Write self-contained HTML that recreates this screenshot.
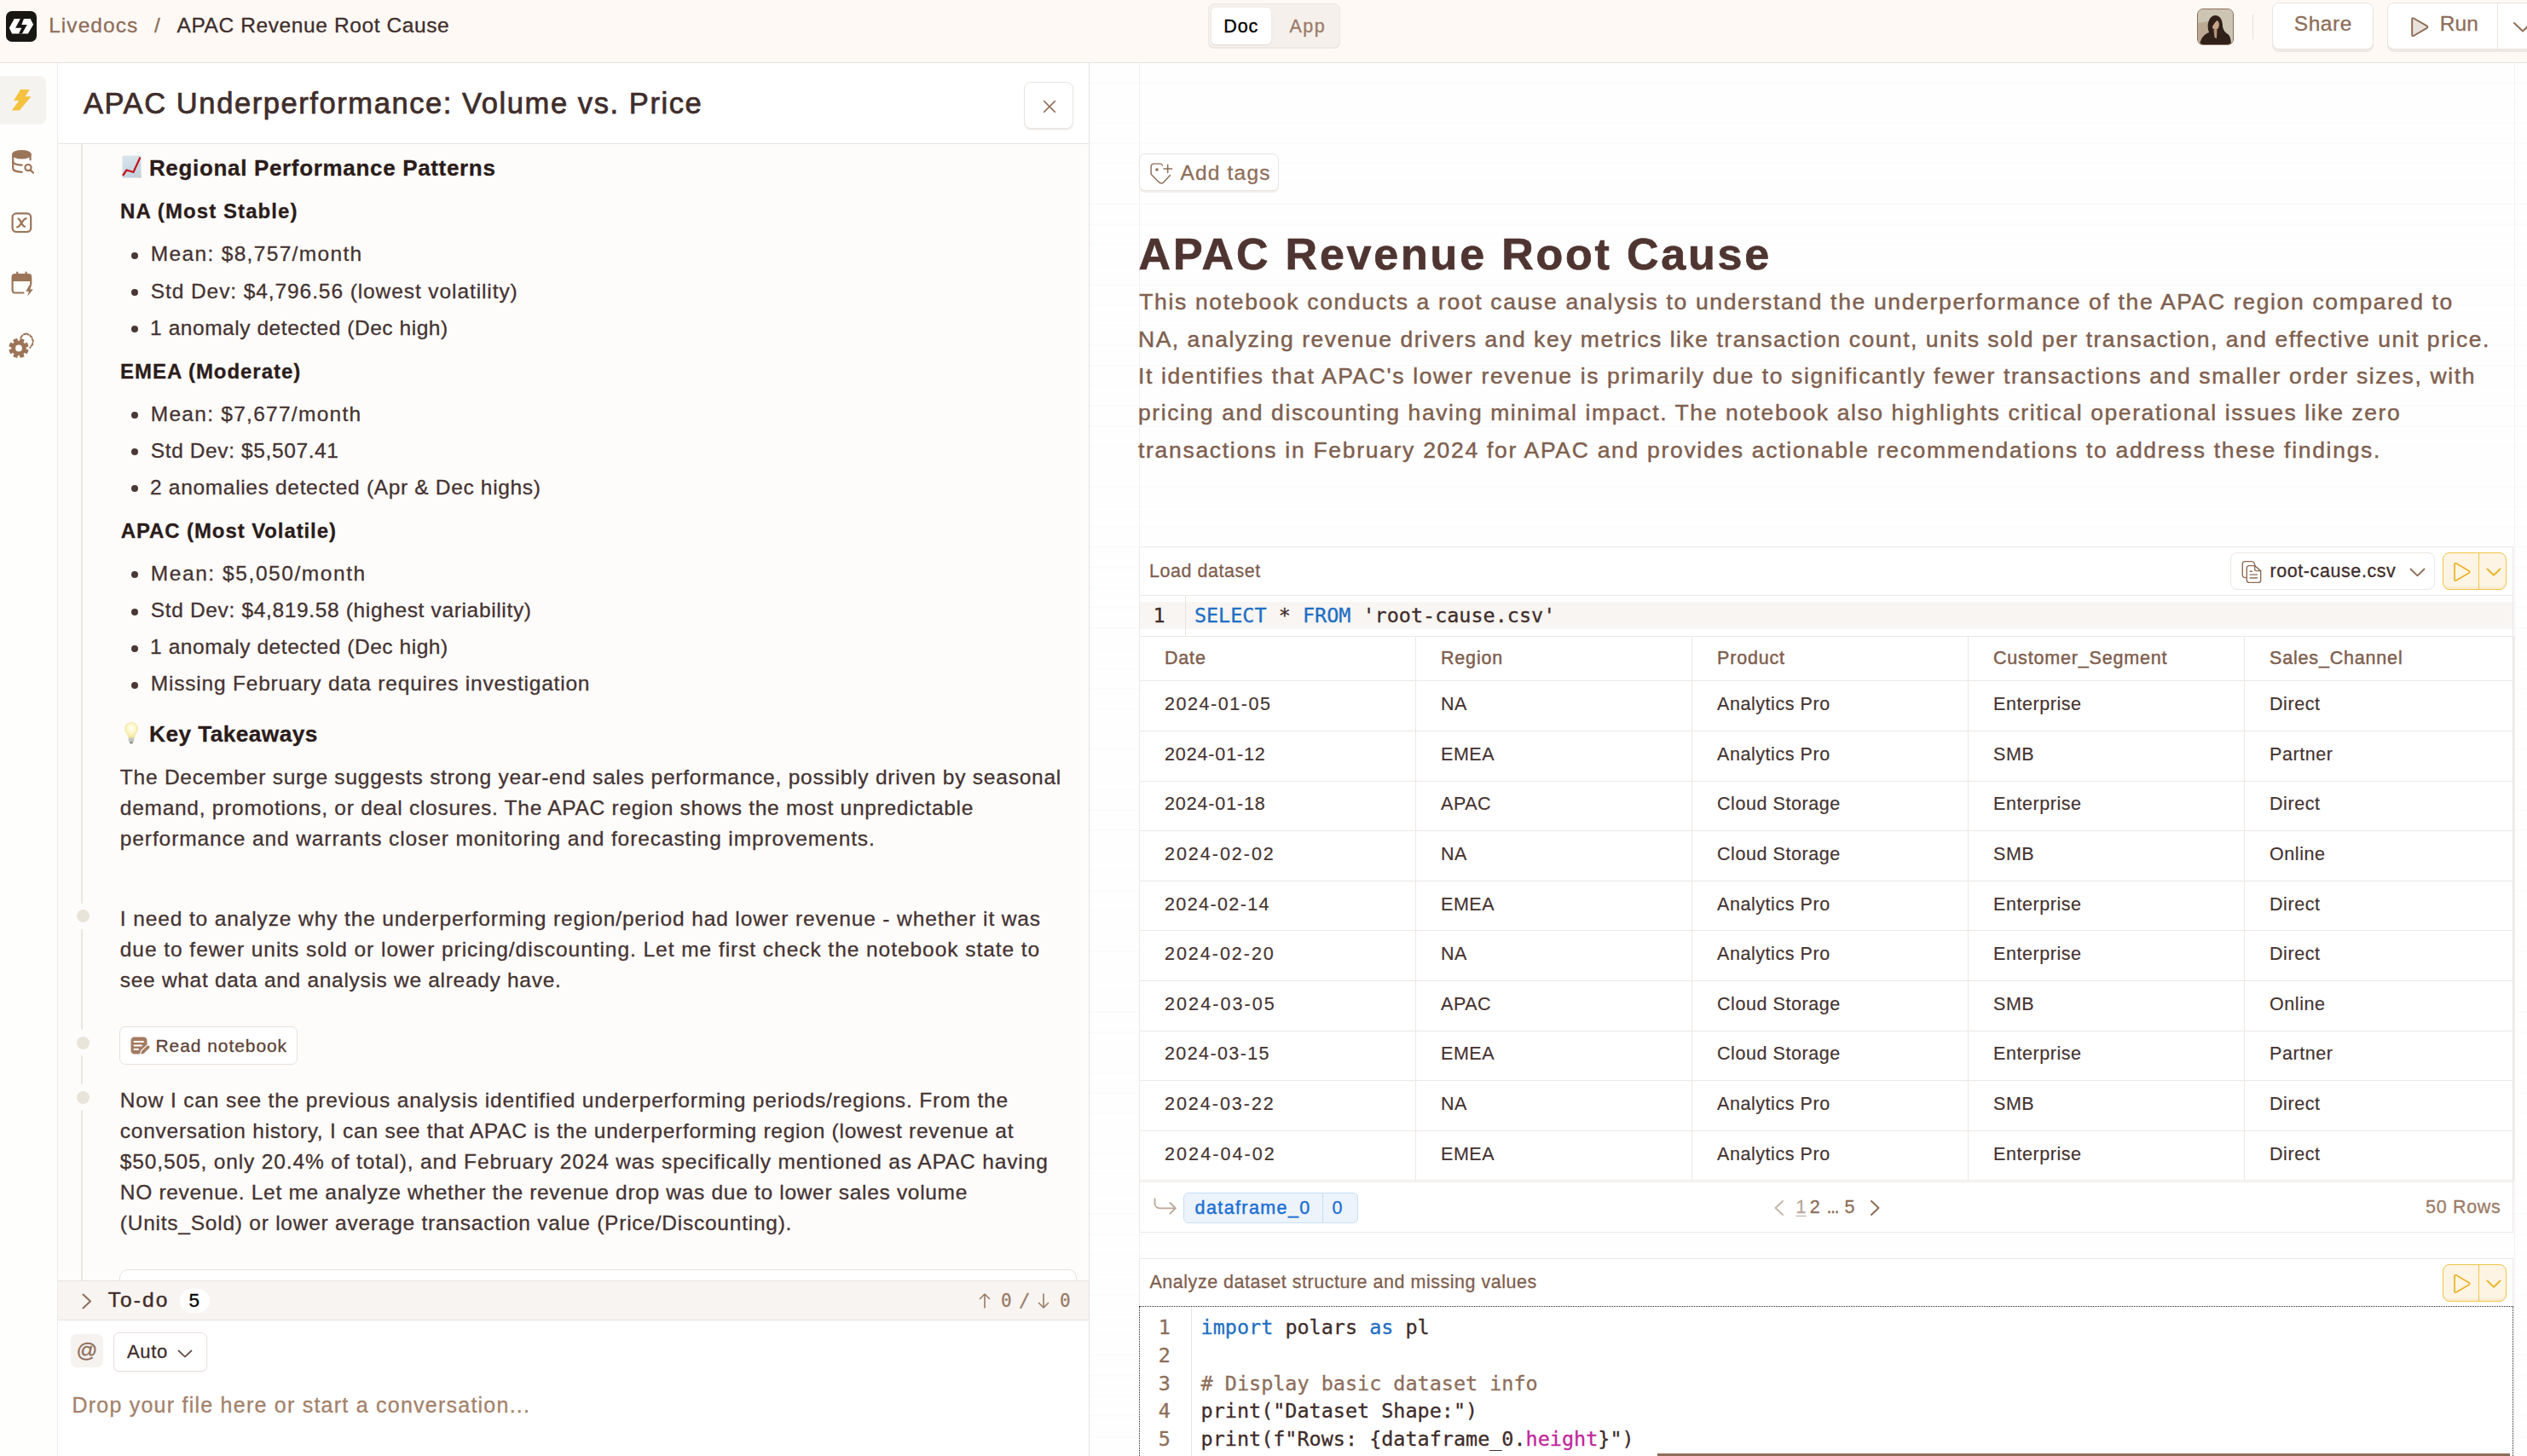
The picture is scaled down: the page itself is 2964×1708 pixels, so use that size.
<!DOCTYPE html>
<html lang="en"><head><meta charset="utf-8"><title>APAC Revenue Root Cause - Livedocs</title>
<style>
*{box-sizing:border-box;margin:0;padding:0}
html,body{width:2964px;height:1708px;overflow:hidden;background:#fff}
body{position:relative;font-family:'Liberation Sans',sans-serif;color:#3f2d2b;-webkit-font-smoothing:antialiased}
.t{position:absolute;white-space:pre;display:block;-webkit-text-stroke:0.3px}
table.df{-webkit-text-stroke:0.18px}
.abs{position:absolute}
svg{position:absolute;overflow:visible}
h1,h2,h3,h4{font-weight:400;font-size:inherit}ul{list-style:none}a{text-decoration:none}
button{font:inherit;color:inherit;background:none;border:0}
/* top bar */
.topbar{position:absolute;left:0;top:0;width:2964px;height:74px;background:#fef9f5;border-bottom:1px solid #e9e3df}
.logo{position:absolute;left:7px;top:13px;width:36px;height:36px;border-radius:7px;background:#191714}
.seg{position:absolute;left:1417px;top:4px;width:155px;height:52px;border-radius:7px;background:#f5f0ec;border:1px solid #efe9e5;box-shadow:0 1px 0 #ebe5e1}
.seg .on{position:absolute;left:3px;top:4px;width:70px;height:43px;border-radius:5px;background:#fff;box-shadow:0 1px 2px rgba(60,30,10,.10)}
.avatar{position:absolute;left:2577px;top:10px;width:43px;height:43px;border-radius:7px;overflow:hidden;border:1px solid #8c705c;background:#ccc4b1}
.vsep{position:absolute;left:2642px;top:17px;width:1px;height:29px;background:#e6dfda}
.btn{position:absolute;background:#fff;border:1px solid #ebe4df;border-radius:8px;box-shadow:0 3px 0 #efe9e6}
/* sidebar */
.sidebar{position:absolute;left:0;top:74px;width:68px;height:1634px;background:#fefefd;border-right:1px solid #ecebea}
.sidebar .active{position:absolute;left:-8px;top:15px;width:62px;height:57px;border-radius:8px;background:#f5f3ef}
/* chat */
.chat{position:absolute;left:68px;top:74px;width:1210px;height:1634px;background:#fefcfa;border-right:1px solid #e6e3e0;overflow:hidden}
.chat-head{position:absolute;left:0;top:0;width:1209px;height:95px;background:#fff;border-bottom:1px solid #e8e4e1}
.iconbtn{position:absolute;background:#fff;border:1px solid #e9e4e0;border-radius:8px;box-shadow:0 2px 0 #f2efed}
.rail{position:absolute;left:27px;width:2px;background:#eae7e3}
.dot{position:absolute;left:22px;width:15px;height:15px;border-radius:50%;background:#e8e4da}
.bul{position:absolute;left:86px;width:8px;height:8px;border-radius:50%;background:#4a3836}
.chip{position:absolute;background:#fff;border:1px solid #e9e1db;border-radius:7px}
.todo{position:absolute;left:0;top:1428px;width:1209px;height:47px;background:#f8f4f1;border-top:1px solid #e9e4e0;border-bottom:1px solid #e9e4e0}
.badge{position:absolute;left:143px;top:9px;width:35px;height:28px;border-radius:14px;background:#fff}
.composer{position:absolute;left:0;top:1475px;width:1209px;height:159px;background:#fff}
.at{position:absolute;left:15px;top:16px;width:38px;height:39px;border-radius:7px;background:#f6f2ef}
.sel{position:absolute;left:65px;top:14px;width:110px;height:46px;border-radius:7px;background:#fff;border:1px solid #e9e2dd;box-shadow:0 1px 2px rgba(60,30,10,.06)}
/* notebook */
.nb{position:absolute;left:1278px;top:74px;width:1686px;height:1634px;background:#fefefe repeating-linear-gradient(to bottom,transparent 0,transparent 22.2px,#fafbfb 22.2px,#fafbfb 23.7px);overflow:hidden}
.paper{position:absolute;left:58px;top:0;width:1614px;height:1634px;border-left:1px solid #f3f1f0;border-right:1px solid #f3f1f0;}
.cell{position:absolute;background:#fff;border:1px solid #ece8e5}
.cell-head{position:absolute;left:0;top:0;right:0}
.filebtn{position:absolute;border:1px solid #ece6e1;border-radius:8px;background:#fff}
.runbtn{position:absolute;border:1px solid #f0c54a;border-radius:8px;background:#fdf4e3;box-shadow:inset 0 -3px 0 #faecd2}
.runbtn i{position:absolute;left:41px;top:0;width:1px;height:100%;background:#f0c54a}
.code{position:absolute;font-family:'DejaVu Sans Mono','Liberation Mono',monospace}
.gut{position:absolute;left:0;top:0;bottom:0;border-right:1px solid #e9e4e0;background:#fdfbfa}
table.df{position:absolute;border-collapse:collapse;table-layout:fixed;font-size:21.5px}
table.df td,table.df th{border:1px solid #ece8e5;padding:0 0 0 29px;text-align:left;font-weight:400;white-space:nowrap;overflow:hidden}
table.df th{-webkit-text-stroke:0.45px;color:#7f5f4f;height:52.4px;padding-bottom:1px}
table.df td{color:#453331;height:58.6px;padding-bottom:3px}
.kw{color:#1f6fc4}.cm{color:#8d6e5a}.at2{color:#c2269c}

</style></head>
<body>
<header class="topbar">
<div class="logo"><svg width="36" height="36" viewBox="0 0 36 36"><polygon fill="#fff" points="3.8,19.8 9.7,9.1 28.7,9.1 32.1,15.8 25.9,26.4 7.1,26.4"/><polygon fill="#191714" points="16.9,9.1 20.95,9.1 18.35,16 24.7,16 18.9,26.4 14.9,26.4 18.35,19.7 11.1,19.7"/></svg></div>
<nav>
<a class="t" style="left:57.2px;top:14.2px;font-size:24.5px;line-height:32px;letter-spacing:1.05px;color:#8e6d59;">Livedocs</a>
<span class="t" style="left:181.0px;top:14.2px;font-size:24.5px;line-height:32px;color:#8e6d59;">/</span>
<span class="t" style="left:207.5px;top:14.2px;font-size:24.5px;line-height:32px;letter-spacing:0.60px;color:#3f2d2b;">APAC Revenue Root Cause</span>
</nav>
<div class="seg"><div class="on"></div>
<span class="t" style="left:17.3px;top:11.6px;font-size:21.5px;line-height:28px;letter-spacing:0.90px;color:#000;-webkit-text-stroke:0.35px #000;">Doc</span>
<span class="t" style="left:94.5px;top:11.6px;font-size:21.5px;line-height:28px;letter-spacing:1.53px;color:#9a7a66;">App</span>
</div>
<div class="avatar"><svg width="43" height="43" viewBox="0 0 43 43"><rect width="43" height="43" fill="#cdc5b3"/><path d="M0 16 L12 14 L12 43 L0 43Z" fill="#bba993"/><path d="M2 43 C3 33 8 29 13 27 C10 20 12 8 20 7 C27 7 29 14 29 20 C30 25 32 27 35 29 C38 31 39 36 39 43Z" fill="#2f2118"/><ellipse cx="20.6" cy="18" rx="4.3" ry="6" fill="#c8a489"/><path d="M18.5 24 L22.5 24 L22 34 L19.5 33Z" fill="#b8937a"/><path d="M15.5 12 C18 9 23 9 25.5 13 C23 12 21 14 19 17 C17 20 16 22 15.8 24 C14.5 20 14.5 15 15.5 12Z" fill="#2f2118"/></svg></div>
<i class="vsep"></i>
<button class="btn" style="left:2665px;top:3px;width:119px;height:55px"></button>
<span class="t" style="left:2690.8px;top:12.3px;font-size:24.5px;line-height:32px;letter-spacing:0.55px;color:#8e6d59;">Share</span>
<div class="btn" style="left:2800px;top:3px;width:200px;height:55px"><i class="abs" style="left:128px;top:0;width:1px;height:53px;background:#ebe4df"></i><svg style="left:25px;top:15px" width="24" height="26" viewBox="0 0 24 26"><path d="M3.2 3.6 C3.2 2.6 4.2 2 5.1 2.5 L20.6 11.3 C21.6 11.9 21.6 13.3 20.6 13.9 L5.1 23 C4.2 23.5 3.2 22.9 3.2 21.9Z" fill="#e9e2dc" stroke="#8e6d59" stroke-width="2" stroke-linejoin="round"/></svg><svg style="left:146px;top:21px" width="24" height="14" viewBox="0 0 24 14"><path d="M2 2 L12 11.5 L22 2" fill="none" stroke="#8e6d59" stroke-width="2" stroke-linecap="round" stroke-linejoin="round"/></svg></div>
<span class="t" style="left:2861.7px;top:12.3px;font-size:24.5px;line-height:32px;letter-spacing:0.06px;color:#8e6d59;">Run</span>
</header>
<nav class="sidebar"><div class="active"></div>
<svg style="left:0;top:0" width="68" height="400" viewBox="0 74 68 400"><polygon fill="#f5c23f" points="24.1,105 34.8,105 29.6,113.2 36.6,113.2 22.8,129.5 13.8,129.5 22.3,118 16.1,118"/><g fill="none" stroke="#9c7458" stroke-width="2.2" stroke-linecap="round"><ellipse cx="25.4" cy="181.3" rx="10.2" ry="4.2" fill="#9c7458"/><path d="M15.2 181.3 V197.5 C15.2 200 19.5 201.8 25.8 201.8"/><path d="M35.6 181.3 V187.5"/><path d="M15.2 189.4 C15.2 191.8 19.6 193.6 25.8 193.6"/><circle cx="33" cy="196.6" r="3.6"/><path d="M35.8 199.6 L39 202.8"/></g><rect x="14.6" y="250.4" width="21.6" height="21.6" rx="4.5" fill="none" stroke="#9c7458" stroke-width="2.2"/><g fill="none" stroke="#9c7458" stroke-width="2.300" stroke-linecap="round"><path d="M20.200 266.300 C23.500 266.800 26.800 256.200 30.600 256.400"/><path d="M21.600 256.600 C24 257 25.800 265.600 29 265.800"/></g><g fill="none" stroke="#9c7458" stroke-width="2.2" stroke-linecap="round" stroke-linejoin="round"><path d="M27.5 343.5 H17.5 C15.8 343.5 14.6 342.3 14.6 340.6 V325 C14.6 323.3 15.8 322.1 17.5 322.1 H33.3 C35 322.1 36.2 323.3 36.2 325 V334"/><path d="M20.2 319.6 V323"/><path d="M30.6 319.6 V323"/></g><path d="M14.6 330 V325 C14.6 323.3 15.8 322.1 17.5 322.1 H33.3 C35 322.1 36.2 323.3 36.2 325 V330Z" fill="#9c7458"/><polygon fill="#9c7458" points="34.400,334.600 30.400,341.800 33.800,341.800 32.200,347.600 38.800,339.400 35.400,339.400 37,334.600"/></svg>
<svg style="left:0;top:310px" width="68" height="60" viewBox="0 384 68 60"><polygon points="32.9,410.8 31.5,414.4 28.6,413.2 26.8,415.0 28.0,417.9 24.4,419.3 23.3,416.5 20.7,416.5 19.6,419.3 16.0,417.9 17.2,415.0 15.4,413.2 12.5,414.4 11.1,410.8 13.9,409.7 13.9,407.1 11.1,406.0 12.5,402.4 15.4,403.6 17.2,401.8 16.0,398.9 19.6,397.5 20.7,400.3 23.3,400.3 24.4,397.5 28.0,398.9 26.8,401.8 28.6,403.6 31.5,402.4 32.9,406.0 30.1,407.1 30.1,409.7" fill="#9c7458" stroke="#9c7458" stroke-width="1.2" stroke-linejoin="round"/><circle cx="22" cy="408.4" r="3.9" fill="#fefefd"/><path d="M24.4 396.2 C25.4 393.6 27.6 391.8 30.4 391.8 M30.4 391.8 C31.2 391.2 32.4 391.4 33 392.4 C34.4 392.4 35.6 393.2 35.8 394.6 C37.4 395 38.2 396.4 37.8 398 C39 399 39.2 400.8 38 402 C38.6 403.4 38 405 36.6 405.6 C36.6 406.6 36 407.4 35.2 407.8" fill="none" stroke="#9c7458" stroke-width="2" stroke-linecap="round" stroke-dasharray="3.2 2.2"/></svg>
</nav>
<section class="chat">
<div class="chat-body">
<i class="rail" style="top:95px;height:891px"></i>
<i class="rail" style="top:1016px;height:118px"></i>
<i class="rail" style="top:1164px;height:34px"></i>
<i class="rail" style="top:1228px;height:200px"></i>
<i class="dot" style="top:993.0px"></i>
<i class="dot" style="top:1142.0px"></i>
<i class="dot" style="top:1206.0px"></i>
<svg style="left:75px;top:108px" width="23" height="27" viewBox="0 0 23 27" role="img" aria-label="chart increasing"><defs><linearGradient id="pg" x1="0" y1="0" x2="0.3" y2="1"><stop offset="0" stop-color="#dbe7ef"/><stop offset="1" stop-color="#c3d2dc"/></linearGradient></defs><rect x="0.5" y="0.5" width="22" height="26" fill="url(#pg)"/><path d="M18 22 H22.5 V26.5 H18Z" fill="#c9cfd3"/><path d="M1 24 L5.5 17.5 L13.5 20 L21.5 2.5" fill="none" stroke="#c4141c" stroke-width="2.2" stroke-linejoin="miter"/></svg>
<h3 class="t" style="left:106.9px;top:105.5px;font-size:26px;line-height:34px;letter-spacing:0.67px;font-weight:700;color:#2b1c1b;">Regional Performance Patterns</h3>
<h4 class="t" style="left:73.1px;top:157.8px;font-size:24px;line-height:31px;letter-spacing:1.09px;font-weight:700;color:#2b1c1b;">NA (Most Stable)</h4>
<h4 class="t" style="left:73.1px;top:346.2px;font-size:24px;line-height:31px;letter-spacing:0.95px;font-weight:700;color:#2b1c1b;">EMEA (Moderate)</h4>
<h4 class="t" style="left:73.7px;top:533.1px;font-size:24px;line-height:31px;letter-spacing:0.90px;font-weight:700;color:#2b1c1b;">APAC (Most Volatile)</h4>
<svg style="left:78px;top:772.5px" width="16" height="26" viewBox="0 0 16 26" role="img" aria-label="light bulb"><defs><radialGradient id="bg" cx="0.5" cy="0.38" r="0.62"><stop offset="0" stop-color="#fffff6"/><stop offset="0.55" stop-color="#fdf6c4"/><stop offset="1" stop-color="#f0df8e"/></radialGradient></defs><path d="M8 0.600 C12.300 0.600 15.400 3.800 15.400 7.800 C15.400 10.600 14 12.300 12.900 14 C12 15.400 11.600 16.800 11.500 18.600 H4.500 C4.400 16.800 4 15.400 3.100 14 C2 12.300 0.600 10.600 0.600 7.800 C0.600 3.800 3.700 0.600 8 0.600Z" fill="url(#bg)" stroke="#eadf9f" stroke-width="0.700"/><rect x="4.700" y="18.600" width="6.600" height="4.400" rx="1" fill="#c4c4be"/><path d="M5.800 23 H10.200 L9.300 25.400 H6.700Z" fill="#8e8e8a"/></svg>
<h3 class="t" style="left:107.0px;top:769.7px;font-size:26.3px;line-height:34px;letter-spacing:0.41px;font-weight:700;color:#2b1c1b;">Key Takeaways</h3>
<ul>
<li><i class="bul" style="top:221.8px"></i><span class="t" style="left:108.8px;top:208.3px;font-size:24.5px;line-height:32px;letter-spacing:1.33px;color:#443332;">Mean: $8,757/month</span></li>
<li><i class="bul" style="top:265.0px"></i><span class="t" style="left:108.8px;top:251.5px;font-size:24.5px;line-height:32px;letter-spacing:0.91px;color:#443332;">Std Dev: $4,796.56 (lowest volatility)</span></li>
<li><i class="bul" style="top:308.2px"></i><span class="t" style="left:108.1px;top:294.7px;font-size:24.5px;line-height:32px;letter-spacing:0.55px;color:#443332;">1 anomaly detected (Dec high)</span></li>
</ul>
<ul>
<li><i class="bul" style="top:409.0px"></i><span class="t" style="left:108.8px;top:395.5px;font-size:24.5px;line-height:32px;letter-spacing:1.27px;color:#443332;">Mean: $7,677/month</span></li>
<li><i class="bul" style="top:452.2px"></i><span class="t" style="left:108.8px;top:438.7px;font-size:24.5px;line-height:32px;letter-spacing:0.61px;color:#443332;">Std Dev: $5,507.41</span></li>
<li><i class="bul" style="top:495.4px"></i><span class="t" style="left:108.1px;top:481.9px;font-size:24.5px;line-height:32px;letter-spacing:0.67px;color:#443332;">2 anomalies detected (Apr &amp; Dec highs)</span></li>
</ul>
<ul>
<li><i class="bul" style="top:596.3px"></i><span class="t" style="left:108.8px;top:582.8px;font-size:24.5px;line-height:32px;letter-spacing:1.57px;color:#443332;">Mean: $5,050/month</span></li>
<li><i class="bul" style="top:639.5px"></i><span class="t" style="left:108.8px;top:626.0px;font-size:24.5px;line-height:32px;letter-spacing:0.65px;color:#443332;">Std Dev: $4,819.58 (highest variability)</span></li>
<li><i class="bul" style="top:682.7px"></i><span class="t" style="left:108.1px;top:669.2px;font-size:24.5px;line-height:32px;letter-spacing:0.55px;color:#443332;">1 anomaly detected (Dec high)</span></li>
<li><i class="bul" style="top:725.9px"></i><span class="t" style="left:108.8px;top:712.4px;font-size:24.5px;line-height:32px;letter-spacing:0.79px;color:#443332;">Missing February data requires investigation</span></li>
</ul>
<p>
<span class="t" style="left:72.8px;top:822.2px;font-size:24.5px;line-height:32px;letter-spacing:0.77px;color:#443332;">The December surge suggests strong year-end sales performance, possibly driven by seasonal</span>
<span class="t" style="left:72.8px;top:858.2px;font-size:24.5px;line-height:32px;letter-spacing:0.73px;color:#443332;">demand, promotions, or deal closures. The APAC region shows the most unpredictable</span>
<span class="t" style="left:72.8px;top:894.2px;font-size:24.5px;line-height:32px;letter-spacing:0.90px;color:#443332;">performance and warrants closer monitoring and forecasting improvements.</span>
</p>
<p>
<span class="t" style="left:72.8px;top:987.5px;font-size:24.5px;line-height:32px;letter-spacing:0.88px;color:#443332;">I need to analyze why the underperforming region/period had lower revenue - whether it was</span>
<span class="t" style="left:72.8px;top:1023.5px;font-size:24.5px;line-height:32px;letter-spacing:0.95px;color:#443332;">due to fewer units sold or lower pricing/discounting. Let me first check the notebook state to</span>
<span class="t" style="left:72.8px;top:1059.5px;font-size:24.5px;line-height:32px;letter-spacing:0.70px;color:#443332;">see what data and analysis we already have.</span>
</p>
<div class="chip" style="left:72px;top:1130px;width:209px;height:45px"><svg style="left:12px;top:10px" width="24" height="24" viewBox="0 0 24 24"><path d="M4.5 1.5 H15.5 C17.7 1.5 19.5 3.3 19.5 5.5 V12 L11 21.5 H4.5 C2.3 21.5 0.5 19.7 0.5 17.5 V5.5 C0.5 3.3 2.3 1.5 4.5 1.5Z" fill="#a47c63"/><path d="M4.5 7 H15 M4.5 11.5 H13 M4.5 16 H9" stroke="#fff" stroke-width="2" stroke-linecap="round"/><path d="M11.5 22.5 L12.5 17.8 L19 11.6 C20 10.7 21.6 10.8 22.5 11.8 C23.4 12.8 23.3 14.3 22.3 15.2 L15.8 21.4Z" fill="#a47c63" stroke="#fff" stroke-width="1.2"/></svg>
<span class="t" style="left:41.5px;top:7.9px;font-size:21px;line-height:27px;letter-spacing:0.93px;color:#5d4338;-webkit-text-stroke:0.3px #5d4338;">Read notebook</span>
</div>
<p>
<span class="t" style="left:72.8px;top:1200.5px;font-size:24.5px;line-height:32px;letter-spacing:0.84px;color:#443332;">Now I can see the previous analysis identified underperforming periods/regions. From the</span>
<span class="t" style="left:72.8px;top:1236.5px;font-size:24.5px;line-height:32px;letter-spacing:0.75px;color:#443332;">conversation history, I can see that APAC is the underperforming region (lowest revenue at</span>
<span class="t" style="left:72.8px;top:1272.5px;font-size:24.5px;line-height:32px;letter-spacing:0.86px;color:#443332;">$50,505, only 20.4% of total), and February 2024 was specifically mentioned as APAC having</span>
<span class="t" style="left:72.8px;top:1308.5px;font-size:24.5px;line-height:32px;letter-spacing:0.69px;color:#443332;">NO revenue. Let me analyze whether the revenue drop was due to lower sales volume</span>
<span class="t" style="left:72.8px;top:1344.5px;font-size:24.5px;line-height:32px;letter-spacing:0.76px;color:#443332;">(Units_Sold) or lower average transaction value (Price/Discounting).</span>
</p>
<div class="chip" style="left:72px;top:1415px;width:1123px;height:60px;border-radius:10px"></div>
</div>
<div class="chat-head">
<h2 class="t" style="left:30.0px;top:24.5px;font-size:34.5px;line-height:45px;letter-spacing:1.58px;color:#3f2d2b;-webkit-text-stroke:0.75px;">APAC Underperformance: Volume vs. Price</h2>
<button class="iconbtn" style="left:1133px;top:22px;width:58px;height:55px"><svg style="left:21px;top:20px" width="16" height="16" viewBox="0 0 16 16"><path d="M1.600 1.600 L14.400 14.400 M14.400 1.600 L1.600 14.400" stroke="#8e6d59" stroke-width="1.500" stroke-linecap="round"/></svg></button>
</div>
<div class="todo">
<svg style="left:28px;top:14px" width="12" height="19" viewBox="0 0 12 19"><path d="M1.5 1.5 L10 9.5 L1.5 17.5" fill="none" stroke="#8e6d59" stroke-width="2" stroke-linecap="round" stroke-linejoin="round"/></svg>
<span class="t" style="left:58.8px;top:6.2px;font-size:24.5px;line-height:32px;letter-spacing:2.07px;color:#3f2d2b;-webkit-text-stroke:0.45px #3f2d2b;">To-do</span>
<span class="badge"></span>
<span class="t" style="left:153.5px;top:7.9px;font-size:22.5px;line-height:29px;color:#000;">5</span>
<svg style="left:1080px;top:11.500px" width="110" height="22" viewBox="0 0 110 22" fill="none" stroke="#9b7b67" stroke-width="1.600" stroke-linecap="round" stroke-linejoin="round"><path d="M7 19 V3 M1.5 8.5 L7 3 L12.5 8.5"/><path d="M76 3 V19 M70.500 13.5 L76 19 L81.500 13.500"/></svg>
<span class="t" style="left:1106.0px;top:9.7px;font-size:21px;line-height:27px;color:#9b7b67;font-family:'DejaVu Sans Mono',monospace;">0</span>
<span class="t" style="left:1128.0px;top:9.7px;font-size:21px;line-height:27px;color:#9b7b67;font-family:'DejaVu Sans Mono',monospace;font-style:oblique;">/</span>
<span class="t" style="left:1175.0px;top:9.7px;font-size:21px;line-height:27px;color:#9b7b67;font-family:'DejaVu Sans Mono',monospace;">0</span>
</div>
<div class="composer">
<button class="at"></button>
<span class="t" style="left:21.5px;top:19.0px;font-size:24.5px;line-height:32px;color:#8e6d59;">@</span>
<button class="sel"> <svg style="left:74px;top:19px" width="18" height="11" viewBox="0 0 18 11"><path d="M1.500 1.500 L9 8.600 L16.500 1.500" fill="none" stroke="#6d5146" stroke-width="1.8" stroke-linecap="round" stroke-linejoin="round"/></svg></button>
<span class="t" style="left:81.0px;top:21.6px;font-size:22px;line-height:29px;letter-spacing:0.70px;color:#3f2d2b;">Auto</span>
<span class="t" style="left:16.4px;top:82.8px;font-size:25px;line-height:32px;letter-spacing:1.24px;color:#a3826c;">Drop your file here or start a conversation...</span>
</div>
</section>
<main class="nb"><div class="paper"></div>
<button class="iconbtn" style="left:58px;top:106px;width:164px;height:44px;border-radius:7px"><svg style="left:12px;top:10px" width="27" height="26" viewBox="0 0 27 26" fill="none" stroke="#8e6d59" stroke-width="1.450" stroke-linecap="round" stroke-linejoin="round"><path d="M14.500 3.100 C14.200 2 13.400 1.100 12.200 1.100 H4.600 C2.600 1.100 1.100 2.600 1.100 4.600 V12 C1.100 13 1.500 13.900 2.200 14.600 L10.600 22.900 C12.300 24.300 14.300 24.300 15.600 22.900 L23.600 14.500"/><circle cx="8" cy="8" r="1.100" fill="#8e6d59"/><path d="M20.700 2.300 V11.600 M16 6.900 H25.600"/></svg></button>
<span class="t" style="left:106.5px;top:113.1px;font-size:24.5px;line-height:32px;letter-spacing:1.18px;color:#8e6d59;">Add tags</span>
<h1 class="t" style="left:57.6px;top:194.0px;font-size:52px;line-height:60px;letter-spacing:2.80px;font-weight:700;color:#4f3531;-webkit-text-stroke:0.7px;">APAC Revenue Root Cause</h1>
<p>
<span class="t" style="left:58.2px;top:263.3px;font-size:26.5px;line-height:34px;letter-spacing:1.66px;color:#7f5f4f;-webkit-text-stroke:0.45px;">This notebook conducts a root cause analysis to understand the underperformance of the APAC region compared to</span>
<span class="t" style="left:57.0px;top:306.6px;font-size:26.5px;line-height:34px;letter-spacing:1.52px;color:#7f5f4f;-webkit-text-stroke:0.45px;">NA, analyzing revenue drivers and key metrics like transaction count, units sold per transaction, and effective unit price.</span>
<span class="t" style="left:57.0px;top:350.0px;font-size:26.5px;line-height:34px;letter-spacing:1.62px;color:#7f5f4f;-webkit-text-stroke:0.45px;">It identifies that APAC's lower revenue is primarily due to significantly fewer transactions and smaller order sizes, with</span>
<span class="t" style="left:57.0px;top:393.3px;font-size:26.5px;line-height:34px;letter-spacing:1.59px;color:#7f5f4f;-webkit-text-stroke:0.45px;">pricing and discounting having minimal impact. The notebook also highlights critical operational issues like zero</span>
<span class="t" style="left:57.0px;top:436.6px;font-size:26.5px;line-height:34px;letter-spacing:1.70px;color:#7f5f4f;-webkit-text-stroke:0.45px;">transactions in February 2024 for APAC and provides actionable recommendations to address these findings.</span>
</p>
<section class="cell" style="left:58px;top:567px;width:1612px;height:805px">
<span class="t" style="left:11.0px;top:13.6px;font-size:21.5px;line-height:28px;letter-spacing:0.54px;color:#7f5f4f;">Load dataset</span>
<div class="filebtn" style="left:1279px;top:6px;width:240px;height:44px"><svg style="left:11.500px;top:7.500px" width="24" height="28" viewBox="0 0 24 28" fill="none" stroke="#8e6d59" stroke-width="1.400" stroke-linecap="round" stroke-linejoin="round"><path d="M6.200 20.600 H4.300 C2.600 20.600 1.300 19.300 1.300 17.600 V4.600 C1.300 2.900 2.600 1.600 4.300 1.600 H12 C13.600 1.600 14.900 2.600 15.300 4.100 L16 6.400"/><path d="M9.300 6.600 H15.600 L22.700 12.600 V23.400 C22.700 25.100 21.400 26.400 19.700 26.400 H9.300 C7.600 26.400 6.300 25.100 6.300 23.400 V9.600 C6.300 7.900 7.600 6.600 9.300 6.600Z"/><path d="M15.600 6.600 V10.600 C15.600 11.700 16.500 12.600 17.600 12.600 H22.700"/><path d="M10.200 13.200 H12.700 M10.200 17.100 H18.400 M10.200 21 H18.400"/></svg><svg style="left:209px;top:17px" width="19" height="11" viewBox="0 0 19 11"><path d="M1.500 1.500 L9.500 9.300 L17.500 1.500" fill="none" stroke="#8e6d59" stroke-width="1.800" stroke-linecap="round" stroke-linejoin="round"/></svg></div>
<span class="t" style="left:1325.5px;top:14.3px;font-size:21.5px;line-height:28px;letter-spacing:0.58px;color:#3f2d2b;">root-cause.csv</span>
<div class="runbtn" style="left:1528px;top:6px;width:75px;height:44px"><i></i><svg style="left:11px;top:10px" width="22" height="24" viewBox="0 0 22 24"><path d="M2 2.800 C2 1.900 3 1.300 3.800 1.800 L19 10.800 C19.800 11.300 19.800 12.500 19 13 L3.800 22 C3 22.500 2 21.900 2 21Z" fill="none" stroke="#e9b52c" stroke-width="1.800" stroke-linejoin="round"/></svg><svg style="left:50px;top:17px" width="18" height="11" viewBox="0 0 18 11"><path d="M1.500 1.500 L9 8.800 L16.500 1.500" fill="none" stroke="#e9b52c" stroke-width="1.900" stroke-linecap="round" stroke-linejoin="round"/></svg></div>
<div class="code" style="left:0;top:56px;width:1610px;height:48px;border-top:1px solid #ece8e5;background:#fff"><div class="abs" style="left:0;top:7px;width:1610px;height:32px;background:#f8f5f2"></div><div class="gut" style="width:54px;background:transparent"></div>
<span class="t" style="left:15.5px;top:7.9px;font-size:23.45px;line-height:30px;color:#3f2d2b;font-family:'DejaVu Sans Mono',monospace;">1</span>
<code class="t" style="left:63.9px;top:7.9px;font-size:23.45px;line-height:30px;color:#3f2d2b;font-family:'DejaVu Sans Mono',monospace;"><span class="kw">SELECT</span> * <span class="kw">FROM</span> 'root-cause.csv'</code>
</div>
<table class="df" style="left:-1px;top:104px;width:1612px;letter-spacing:0.56px">
<colgroup><col style="width:324px"><col style="width:324px"><col style="width:324px"><col style="width:324px"><col style="width:316px"></colgroup>
<thead><tr style="letter-spacing:0.82px"><th>Date</th><th>Region</th><th>Product</th><th>Customer_Segment</th><th>Sales_Channel</th></tr></thead><tbody>
<tr><td style="letter-spacing:1.56px">2024-01-05</td><td>NA</td><td>Analytics Pro</td><td>Enterprise</td><td>Direct</td></tr>
<tr><td style="letter-spacing:0.87px">2024-01-12</td><td>EMEA</td><td>Analytics Pro</td><td>SMB</td><td>Partner</td></tr>
<tr><td style="letter-spacing:0.87px">2024-01-18</td><td>APAC</td><td>Cloud Storage</td><td>Enterprise</td><td>Direct</td></tr>
<tr><td style="letter-spacing:1.98px">2024-02-02</td><td>NA</td><td>Cloud Storage</td><td>SMB</td><td>Online</td></tr>
<tr><td style="letter-spacing:1.39px">2024-02-14</td><td>EMEA</td><td>Analytics Pro</td><td>Enterprise</td><td>Direct</td></tr>
<tr><td style="letter-spacing:1.98px">2024-02-20</td><td>NA</td><td>Analytics Pro</td><td>Enterprise</td><td>Direct</td></tr>
<tr><td style="letter-spacing:2.09px">2024-03-05</td><td>APAC</td><td>Cloud Storage</td><td>SMB</td><td>Online</td></tr>
<tr><td style="letter-spacing:1.39px">2024-03-15</td><td>EMEA</td><td>Cloud Storage</td><td>Enterprise</td><td>Partner</td></tr>
<tr><td style="letter-spacing:1.98px">2024-03-22</td><td>NA</td><td>Analytics Pro</td><td>SMB</td><td>Direct</td></tr>
<tr><td style="letter-spacing:2.09px">2024-04-02</td><td>EMEA</td><td>Analytics Pro</td><td>Enterprise</td><td>Direct</td></tr>
</tbody></table>
<div class="abs" style="left:0;top:744px;width:1610px;height:59px;border-top:1px solid #ece8e5">
<svg style="left:15.500px;top:18px" width="28" height="20" viewBox="0 0 28 20" fill="none" stroke="#b9a596" stroke-width="1.800" stroke-linecap="round" stroke-linejoin="round"><path d="M1.500 1.500 V6.500 C1.500 9.800 4 12.300 7.300 12.300 H25.500"/><path d="M19.500 6 L25.800 12.300 L19.500 18.600"/></svg>
<div class="abs" style="left:50.5px;top:12px;width:205px;height:36px;background:#ecf3fb;border:1px solid #c9dff5;border-radius:6px"><i class="abs" style="left:162.500px;top:0;width:1px;height:34px;background:#c9dff5"></i></div>
<span class="t" style="left:64.6px;top:15.6px;font-size:21.5px;line-height:28px;letter-spacing:1.39px;color:#1d6fd1;-webkit-text-stroke:0.45px;">dataframe_0</span>
<span class="t" style="left:225.6px;top:15.6px;font-size:21.5px;line-height:28px;color:#1d6fd1;">0</span>
<svg style="left:743px;top:20px" width="130" height="20" viewBox="2079 1406 130 20" fill="none" stroke-width="2" stroke-linecap="round" stroke-linejoin="round"><path d="M2090 1408 L2081.500 1416 L2090 1424" stroke="#c4b4a9"/><path d="M2194 1408 L2202.500 1416 L2194 1424" stroke="#8e6d59"/></svg>
<span class="t" style="left:769.5px;top:14.6px;font-size:21.5px;line-height:28px;color:#b7a69b;text-decoration:underline;text-underline-offset:3px;text-decoration-thickness:1px;">1</span>
<span class="t" style="left:785.8px;top:14.6px;font-size:21.5px;line-height:28px;color:#8e6d59;">2</span>
<span class="t" style="left:805.5px;top:14.6px;font-size:21.5px;line-height:28px;letter-spacing:-2.05px;color:#8e6d59;letter-spacing:-1.5px;">...</span>
<span class="t" style="left:826.5px;top:14.6px;font-size:21.5px;line-height:28px;color:#8e6d59;">5</span>
<span class="t" style="left:1508.0px;top:14.6px;font-size:21.5px;line-height:28px;letter-spacing:0.70px;color:#9b7b67;">50 Rows</span>
</div>
</section>
<section class="cell" style="left:58px;top:1402px;width:1612px;height:300px">
<span class="t" style="left:11.5px;top:12.6px;font-size:21.5px;line-height:28px;letter-spacing:0.52px;color:#7f5f4f;">Analyze dataset structure and missing values</span>
<div class="runbtn" style="left:1528px;top:6px;width:75px;height:44px"><i></i><svg style="left:11px;top:10px" width="22" height="24" viewBox="0 0 22 24"><path d="M2 2.800 C2 1.900 3 1.300 3.800 1.800 L19 10.800 C19.800 11.300 19.800 12.500 19 13 L3.800 22 C3 22.500 2 21.900 2 21Z" fill="none" stroke="#e9b52c" stroke-width="1.800" stroke-linejoin="round"/></svg><svg style="left:50px;top:17px" width="18" height="11" viewBox="0 0 18 11"><path d="M1.500 1.500 L9 8.800 L16.500 1.500" fill="none" stroke="#e9b52c" stroke-width="1.900" stroke-linecap="round" stroke-linejoin="round"/></svg></div>
<div class="code" style="left:-1px;top:55px;width:1612px;height:240px;border:1px dotted #222;background:#fff"><div class="gut" style="width:61px;background:#fff"></div>
<span class="t" style="left:21.8px;top:9.3px;font-size:23.45px;line-height:30px;color:#8d6e5a;font-family:'DejaVu Sans Mono',monospace;">1</span>
<code class="t" style="left:71.6px;top:9.3px;font-size:23.45px;line-height:30px;color:#3f2d2b;font-family:'DejaVu Sans Mono',monospace;"><span class="kw">import</span> polars <span class="kw">as</span> pl</code>
<span class="t" style="left:21.8px;top:41.9px;font-size:23.45px;line-height:30px;color:#8d6e5a;font-family:'DejaVu Sans Mono',monospace;">2</span>
<span class="t" style="left:21.8px;top:74.5px;font-size:23.45px;line-height:30px;color:#8d6e5a;font-family:'DejaVu Sans Mono',monospace;">3</span>
<code class="t" style="left:71.6px;top:74.5px;font-size:23.45px;line-height:30px;color:#3f2d2b;font-family:'DejaVu Sans Mono',monospace;"><span class="cm"># Display basic dataset info</span></code>
<span class="t" style="left:21.8px;top:107.1px;font-size:23.45px;line-height:30px;color:#8d6e5a;font-family:'DejaVu Sans Mono',monospace;">4</span>
<code class="t" style="left:71.6px;top:107.1px;font-size:23.45px;line-height:30px;color:#3f2d2b;font-family:'DejaVu Sans Mono',monospace;">print("Dataset Shape:")</code>
<span class="t" style="left:21.8px;top:139.8px;font-size:23.45px;line-height:30px;color:#8d6e5a;font-family:'DejaVu Sans Mono',monospace;">5</span>
<code class="t" style="left:71.6px;top:139.8px;font-size:23.45px;line-height:30px;color:#3f2d2b;font-family:'DejaVu Sans Mono',monospace;">print(f"Rows: {dataframe_0.<span class="at2">height</span>}")</code>
<i class="abs" style="left:607px;top:172px;width:1000px;height:6px;background:#8e6d59"></i>
</div></section>
</main>
</body></html>
